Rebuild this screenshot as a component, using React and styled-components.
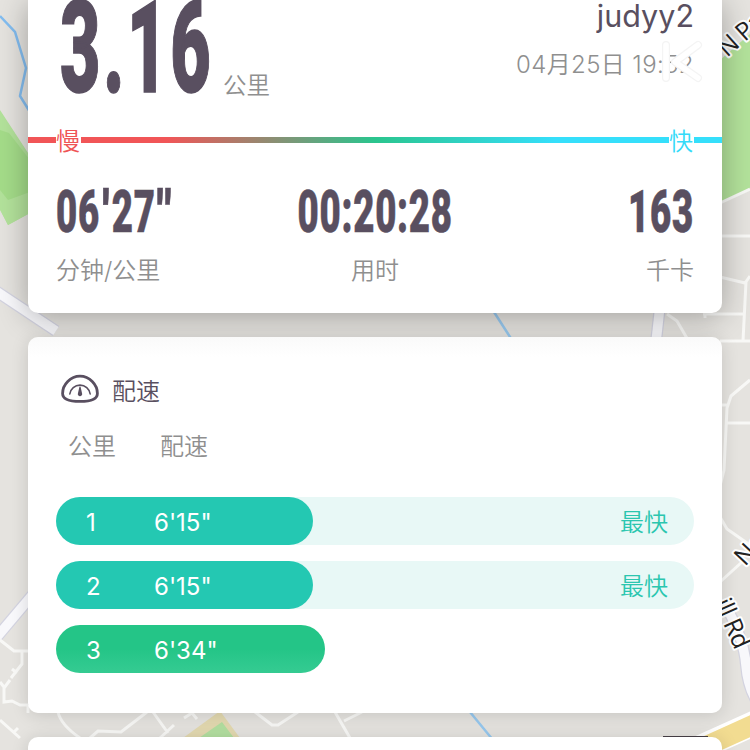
import React from "react";
import styled, { createGlobalStyle } from "styled-components";

const stats = [
  { value: "06'27\"", label: "分钟/公里", align: "left" },
  { value: "00:20:28", label: "用时", align: "center" },
  { value: "163", label: "千卡", align: "right" },
];

const laps = [
  { km: 1, pace: "6'15\"", width: 257, fastest: true },
  { km: 2, pace: "6'15\"", width: 257, fastest: true },
  { km: 3, pace: "6'34\"", width: 269, fastest: false },
];

const MapBackground = () => (
  <MapCanvas width="750" height="750" viewBox="0 0 750 750" fill="none">
    <rect width="750" height="750" fill="#e5e3df" />
    {/* parks */}
    <path d="M0 110L30 156V213L8 225L0 209Z" fill="#b3e29b" />
    <path d="M0 110L30 156V212L8 224L0 209Z" transform="translate(0 1)" fill="#b3e29b" />
    <path d="M0 130L9 133L30 160V192L8 200L0 190Z" fill="#a4dc89" />
    <path d="M720 60L750 34V190L720 204Z" fill="#b3e29b" />
    <path d="M183 738L220 711L240 738Z" fill="#e3d9b0" />
    <path d="M199 738L222 722L234 738Z" fill="#b3dfa0" />
    {/* water */}
    <path d="M0 16L15 32L26 68L20 96L30 112" stroke="#83bdf0" strokeWidth="2.5" />
    <path d="M494 312L512 340M470 712L493 740" stroke="#97c8ee" strokeWidth="2.5" />
    {/* main roads */}
    <g stroke="#d3d3e0" strokeWidth="12">
      <path d="M-4 291L56 331" />
      <path d="M-4 638L34 593" />
      <path d="M660 306L656 342" />
      <path d="M728 610Q744 640 746 665T760 706" />
    </g>
    <g stroke="#f8f8fb" strokeWidth="9.5">
      <path d="M-4 291L56 331" />
      <path d="M-4 638L34 593" />
      <path d="M660 306L656 342" />
      <path d="M728 610Q744 640 746 665T760 706" />
    </g>
    <path d="M684 755L764 719" stroke="#fff" strokeWidth="25" />
    <path d="M684 756L764 720" stroke="#f2dc91" strokeWidth="20" />
    {/* side streets */}
    <g stroke="#f8f8f6" strokeWidth="3">
      <path d="M720 203L750 189M720 236H750M720 277L745 283L750 276M746 282L743 341M703 314H745M705 310V318M720 341H750M667 314L677 321L688 340" />
      <path d="M750 380L731 396L727 408L724 470L720 486M720 405H727M727 423H750M720 517L727 529L750 545M720 582L742 562" />
      <path d="M0 640L14 651H30M22 651V664L11 678M12 669L17 673M10 680L4 688V702L12 701L20 705H28M0 682L4 687M28 705V713M0 720L20 738M13 733L18 728" />
      <path d="M58 712Q61 725 80 738M90 738L98 731L121 732Q134 722 147 712M153 712L168 733M160 738L174 725M184 718L192 713L197 719M255 712L272 725H278L298 712M335 712L350 738M344 721L362 712" />
    </g>
    <path d="M663 736.5H708" stroke="#474047" strokeWidth="1" />
    <MapLabel x="727" y="58" transform="rotate(-42 727 58)">
      N Pa
    </MapLabel>
    <MapLabel x="745" y="567" transform="rotate(-47 745 567)">
      No
    </MapLabel>
    <MapLabel x="714" y="603" transform="rotate(66 714 603)">
      ill Rd
    </MapLabel>
  </MapCanvas>
);

const PaceIcon = () => (
  <svg width="40" height="30" viewBox="0 0 40 30" fill="none">
    <path
      d="M20 2.2C10.5 2.2 2.6 10.5 2.6 19.4C2.6 25.4 9 27.4 20 27.4S37.4 25.4 37.4 19.4C37.4 10.5 29.5 2.2 20 2.2Z"
      stroke="#594f60"
      strokeWidth="2.8"
    />
    <path
      d="M9.8 20A10.3 10.3 0 0 1 30.2 20"
      stroke="#594f60"
      strokeWidth="1.6"
      strokeLinecap="round"
    />
    <path d="M19.5 12.5H20.5L22.1 19.4A2.2 2.2 0 1 1 17.9 19.4Z" fill="#594f60" />
  </svg>
);

const KeepMark = () => (
  <Watermark width="48" height="46" viewBox="0 0 48 46" fill="none">
    <g strokeLinecap="round" strokeLinejoin="round">
      <path d="M9 6V39M41 6L18 23L41 39" stroke="#f4f4f4" strokeWidth="8" />
      <path d="M9 6V39M41 6L18 23L41 39" stroke="#fff" strokeWidth="5.5" />
    </g>
  </Watermark>
);

const StatFigure = ({ value, align }) => (
  <Figure $size={60} $stretch={0.61} $spacing={1.2} $stroke={0.6} $align={align}>
    {value.split("").map((char, i) =>
      char === "'" || char === '"' ? (
        <Prime key={i}>{char}</Prime>
      ) : (
        <span key={i}>{char}</span>
      )
    )}
  </Figure>
);

const App = () => {
  return (
    <>
      <GlobalStyle />
      <Page>
        <MapBackground />
        <Cards>
          <SummaryCard>
            <Header>
              <Distance>
                <DistanceBox>
                  <Figure
                    $size={128}
                    $stretch={0.545}
                    $spacing={5}
                    $stroke={1.5}
                    $align="left"
                  >
                    3.16
                  </Figure>
                </DistanceBox>
                <Unit>公里</Unit>
              </Distance>
              <Meta>
                <UserName>judyy2</UserName>
                <RunDate>04月25日 19:52</RunDate>
                <KeepMark />
              </Meta>
            </Header>
            <SpeedScale>
              <ScaleLabel $color="#ef5456">慢</ScaleLabel>
              <ScaleLabel $color="#34dbf9">快</ScaleLabel>
            </SpeedScale>
            <Stats>
              {stats.map((item) => (
                <Stat key={item.label} $align={item.align}>
                  <StatFigure value={item.value} align={item.align} />
                  <StatLabel>{item.label}</StatLabel>
                </Stat>
              ))}
            </Stats>
          </SummaryCard>

          <PaceCard>
            <CardTitle>
              <PaceIcon />
              <span>配速</span>
            </CardTitle>
            <TableHead>
              <span>公里</span>
              <span>配速</span>
            </TableHead>
            <LapList>
              {laps.map((lap) => (
                <Lap key={lap.km} $fastest={lap.fastest}>
                  <LapFill $fastest={lap.fastest} style={{ width: lap.width }}>
                    <span>{lap.km}</span>
                    <span>{lap.pace}</span>
                  </LapFill>
                  {lap.fastest && <Fastest>最快</Fastest>}
                </Lap>
              ))}
            </LapList>
          </PaceCard>

          <NextCard />
        </Cards>
      </Page>
    </>
  );
};

const GlobalStyle = createGlobalStyle`
  * {
    box-sizing: border-box;
  }

  body {
    margin: 0;
    overflow: hidden;
    font-family: Inter, "Noto Sans CJK SC", sans-serif;
  }
`;

const Page = styled.main`
  position: relative;
  width: 750px;
  height: 750px;
  overflow: hidden;
`;

const MapCanvas = styled.svg`
  position: absolute;
  inset: 0;
`;

const MapLabel = styled.text`
  font-family: "Open Sans", sans-serif;
  font-size: 25px;
  font-weight: 500;
  letter-spacing: -0.8px;
  fill: #222;
  stroke: #fff;
  stroke-width: 4px;
  stroke-linejoin: round;
  paint-order: stroke;
`;

const Cards = styled.div`
  position: relative;
  display: flex;
  flex-direction: column;
  gap: 24px;
  padding: 0 28px;
`;

const Card = styled.section`
  flex: none;
  background: #fff;
  border-radius: 10px;
  box-shadow: 0 2px 18px rgba(0, 0, 0, 0.14);
`;

const SummaryCard = styled(Card)`
  height: 313px;
  border-radius: 0 0 10px 10px;
  box-shadow: 0 4px 30px rgba(0, 0, 0, 0.3);
`;

const Header = styled.header`
  display: flex;
  justify-content: space-between;
  height: 124px;
  padding: 0 28px;
`;

const Distance = styled.div`
  display: flex;
`;

const DistanceBox = styled.div`
  width: 163px;
  margin: -16px 0 0 4px;
`;

const Figure = styled.div`
  width: max-content;
  height: ${({ $size }) => $size}px;
  font-family: Roboto, sans-serif;
  font-size: ${({ $size }) => $size}px;
  font-weight: 900;
  line-height: 1;
  letter-spacing: ${({ $spacing }) => $spacing}px;
  color: #594f60;
  -webkit-text-stroke: ${({ $stroke }) => $stroke}px #594f60;
  transform: scaleX(${({ $stretch }) => $stretch});
  transform-origin: ${({ $align }) => $align} center;
`;

const Prime = styled.span`
  display: inline-block;
  margin: 0 4px 0 5px;
  transform: scaleX(1.25);
`;

const Unit = styled.span`
  margin-top: 68px;
  font-size: 23.5px;
  font-weight: 350;
  line-height: 36px;
  color: #8f8f8f;
`;

const Meta = styled.div`
  position: relative;
  display: flex;
  flex-direction: column;
  align-items: flex-end;
`;

const UserName = styled.span`
  height: 40px;
  margin-top: -4px;
  font-size: 30.5px;
  line-height: 40px;
  color: #594f60;
`;

const RunDate = styled.span`
  margin-top: 11px;
  font-size: 24px;
  font-weight: 350;
  line-height: 36px;
  letter-spacing: 0.4px;
  color: #8f8f8f;
`;

const Watermark = styled.svg`
  position: absolute;
  top: 39px;
  right: -11px;
`;

const SpeedScale = styled.div`
  display: flex;
  align-items: center;
  justify-content: space-between;
  height: 32px;
  padding: 0 28px;
  background: linear-gradient(
      90deg,
      #f15557 20%,
      #2ac58e 50%,
      #35dffb 76%
    )
    center / 100% 6px no-repeat;
`;

const ScaleLabel = styled.span`
  width: 25px;
  padding-top: 3px;
  background: #fff;
  font-size: 24px;
  line-height: 29px;
  font-weight: 350;
  color: ${({ $color }) => $color};
`;

const Stats = styled.div`
  display: grid;
  grid-template-columns: 170px 1fr 170px;
  padding: 26px 28px 0;
`;

const Stat = styled.div`
  display: flex;
  flex-direction: column;
  align-items: ${({ $align }) =>
    ({ left: "flex-start", center: "center", right: "flex-end" })[$align]};
`;

const StatLabel = styled.span`
  margin-top: 11px;
  font-size: 24px;
  font-weight: 350;
  line-height: 36px;
  color: #8f8f8f;
`;

const PaceCard = styled(Card)`
  height: 376px;
  padding: 34px 28px 0;
  background: linear-gradient(#fafafa, #fff 20px);
`;

const CardTitle = styled.h2`
  display: flex;
  align-items: center;
  gap: 12px;
  height: 36px;
  margin: 0 0 0 4px;
  font-size: 24px;
  font-weight: 350;
  color: #594f60;
`;

const TableHead = styled.div`
  display: grid;
  grid-template-columns: 92px auto;
  margin: 22px 0 0 12px;
  font-size: 24px;
  font-weight: 350;
  line-height: 36px;
  color: #8f8f8f;
`;

const LapList = styled.div`
  display: flex;
  flex-direction: column;
  gap: 16px;
  margin-top: 32px;
`;

const Lap = styled.div`
  display: flex;
  align-items: center;
  justify-content: space-between;
  height: 48px;
  padding-right: 26px;
  border-radius: 24px;
  background: ${({ $fastest }) => ($fastest ? "#e8f8f6" : "transparent")};
`;

const LapFill = styled.div`
  display: grid;
  grid-template-columns: 68px auto;
  align-items: center;
  height: 48px;
  padding: 2px 0 0 30px;
  border-radius: 24px;
  background: ${({ $fastest }) =>
    $fastest ? "#24c8b2" : "linear-gradient(#24c587 50%, #35cb92)"};
  font-size: 24px;
  font-weight: 400;
  color: #fff;
`;

const Fastest = styled.span`
  padding-top: 3px;
  font-size: 24px;
  font-weight: 350;
  line-height: 36px;
  color: #2bc6af;
`;

const NextCard = styled(Card)`
  height: 60px;
`;

export default App;
